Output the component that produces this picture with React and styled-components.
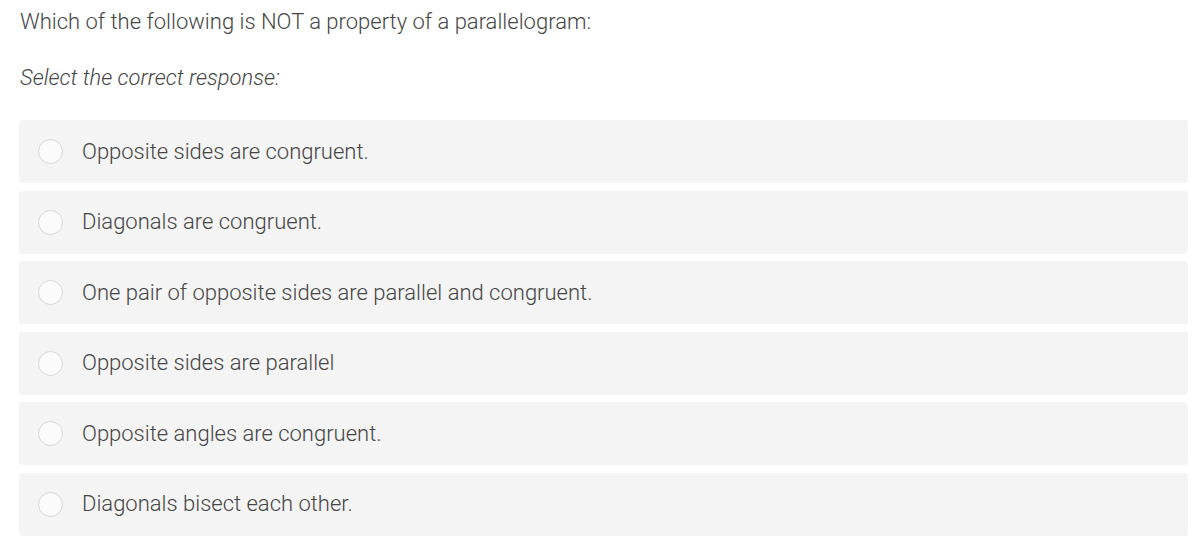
import React from 'react';
import styled, { createGlobalStyle } from 'styled-components';

const GlobalStyle = createGlobalStyle`
  body {
    margin: 0;
    background: #fff;
    font-family: "Roboto Light", Roboto, "Liberation Sans", sans-serif;
    font-weight: 300;
    color: #454545;
  }
`;

const options = [
  'Opposite sides are congruent.',
  'Diagonals are congruent.',
  'One pair of opposite sides are parallel and congruent.',
  'Opposite sides are parallel',
  'Opposite angles are congruent.',
  'Diagonals bisect each other.',
];

const Page = styled.div`
  padding: 8px 16px 0 19px;
`;

const Question = styled.p`
  margin: 0 0 0 1px;
  font-size: 22px;
  line-height: 28px;
`;

const Hint = styled.p`
  margin: 28px 0 0 1px;
  font-size: 22px;
  line-height: 28px;
  font-style: italic;
`;

const List = styled.div`
  margin-top: 28px;
  display: flex;
  flex-direction: column;
  gap: 7.6px;
`;

const Option = styled.label`
  display: flex;
  align-items: center;
  height: 63px;
  padding-left: 19px;
  background: #f4f4f4;
  border-radius: 3px;
  font-size: 22px;
  cursor: pointer;
`;

const Radio = styled.span`
  width: 23px;
  height: 23px;
  border-radius: 50%;
  border: 1px solid #d6d6d6;
  background: #fbfbfb;
  flex-shrink: 0;
`;

const Label = styled.span`
  margin-left: 19px;
  line-height: 28px;
`;

export default function App() {
  return (
    <Page>
      <GlobalStyle />
      <Question>Which of the following is NOT a property of a parallelogram:</Question>
      <Hint>Select the correct response:</Hint>
      <List>
        {options.map((o) => (
          <Option key={o}>
            <Radio />
            <Label>{o}</Label>
          </Option>
        ))}
      </List>
    </Page>
  );
}
